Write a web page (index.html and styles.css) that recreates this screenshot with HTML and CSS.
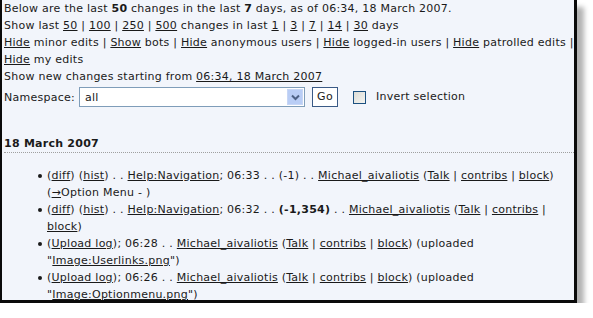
FILE: index.html
```html
<!DOCTYPE html>
<html>
<head>
<meta charset="utf-8">
<link rel="stylesheet" href="styles.css">
</head>
<body>
<div class="frame">
  <div class="content">
    <p class="line">Below are the last <b>50</b> changes in the last <b>7</b> days, as of 06:34, 18 March 2007.</p>
    <p class="line">Show last <a href="#">50</a> | <a href="#">100</a> | <a href="#">250</a> | <a href="#">500</a> changes in last <a href="#">1</a> | <a href="#">3</a> | <a href="#">7</a> | <a href="#">14</a> | <a href="#">30</a> days<br><a href="#">Hide</a> minor edits | <a href="#">Show</a> bots | <a href="#">Hide</a> anonymous users | <a href="#">Hide</a> logged-in users | <a href="#">Hide</a> patrolled <span class="nowrap">edits |</span> <a href="#">Hide</a> my edits</p>
    <p class="line">Show new changes starting from <a href="#">06:34, 18 March 2007</a></p>
    <div class="ns-form">
      <span class="ns-label">Namespace:</span>
      <span class="select"><span class="select-value">all</span><span class="select-btn"><svg width="9" height="7" viewBox="0 0 9 7"><path d="M1 1.5 L4.5 5 L8 1.5" fill="none" stroke="#4d6185" stroke-width="2"/></svg></span></span>
      <span class="go">Go</span>
      <span class="checkbox"></span>
      <span class="invert">Invert selection</span>
    </div>
    <h4 class="day">18 March 2007</h4>
    <ul class="changes">
      <li>(<a href="#">diff</a>) (<a href="#">hist</a>) . . <a href="#">Help:Navigation</a>; 06:33 . . (-1) . . <a href="#">Michael_aivaliotis</a> (<a href="#">Talk</a> | <a href="#">contribs</a> | <a href="#">block</a>) (<a href="#">→</a>Option Menu - )</li>
      <li>(<a href="#">diff</a>) (<a href="#">hist</a>) . . <a href="#">Help:Navigation</a>; 06:32 . . <b>(-1,354)</b> . . <a href="#">Michael_aivaliotis</a> (<a href="#">Talk</a> | <a href="#">contribs</a> | <a href="#">block</a>)</li>
      <li>(<a href="#">Upload log</a>); 06:28 . . <a href="#">Michael_aivaliotis</a> (<a href="#">Talk</a> | <a href="#">contribs</a> | <a href="#">block</a>) (uploaded "<a href="#">Image:Userlinks.png</a>")</li>
      <li>(<a href="#">Upload log</a>); 06:26 . . <a href="#">Michael_aivaliotis</a> (<a href="#">Talk</a> | <a href="#">contribs</a> | <a href="#">block</a>) (uploaded "<a href="#">Image:Optionmenu.png</a>")</li>
    </ul>
  </div>
</div>
</body>
</html>
```

FILE: styles.css
```css
html, body {
  margin: 0;
  padding: 0;
  background: #ffffff;
}
body {
  font-family: "DejaVu Sans", Verdana, sans-serif;
  font-size: 11px;
  line-height: 17px;
  letter-spacing: 0.25px;
  color: #1a1a1a;
}
.frame {
  width: 572px;
  height: 300px;
  border-left: 2px solid #0a0a0a;
  border-right: 3px solid #0a0a0a;
  border-bottom: 3px solid #0a0a0a;
  background: #f2f5fb;
  box-shadow: 7px 7px 5px rgba(0, 0, 0, 0.3);
  overflow: hidden;
}
.content {
  padding: 0 0 0 2px;
}
.line {
  margin: 0;
}
.nowrap {
  white-space: nowrap;
}
a {
  color: #1a1a1a;
  text-decoration: underline;
}
b {
  font-weight: bold;
}
.ns-form {
  display: flex;
  align-items: center;
  height: 20px;
  margin-top: 2px;
}
.ns-label {
  width: 75px;
}
.select {
  display: flex;
  align-items: center;
  justify-content: space-between;
  box-sizing: border-box;
  width: 226px;
  height: 20px;
  border: 1px solid #7f9db9;
  background: #ffffff;
  padding-left: 5px;
}
.select-btn {
  display: flex;
  align-items: center;
  justify-content: center;
  width: 16px;
  height: 16px;
  margin-right: 1px;
  background: #b9cdf5;
  border: 1px solid #c7d6f5;
  box-sizing: border-box;
}
.go {
  box-sizing: border-box;
  width: 26px;
  height: 20px;
  margin-left: 7px;
  border: 1px solid #3a5a86;
  background: #ffffff;
  text-align: center;
  line-height: 18px;
}
.checkbox {
  box-sizing: border-box;
  width: 13px;
  height: 13px;
  margin-left: 15px;
  border: 1px solid #1c5180;
  background: linear-gradient(135deg, #dcdcd6, #f4f4f0);
}
.invert {
  margin-left: 10px;
  margin-top: -2px;
}
.day {
  margin: 28px 0 0 0;
  font-size: 11px;
  font-weight: bold;
  line-height: 17px;
  padding-bottom: 0;
  border-bottom: 1px dotted #a0a0a0;
}
.changes {
  margin: 14px 0 0 0;
  padding-left: 43px;
  padding-right: 8px;
  list-style: none;
}
.changes li {
  position: relative;
  margin: 0;
}
.changes li::before {
  content: "";
  position: absolute;
  left: -9px;
  top: 7px;
  width: 4px;
  height: 4px;
  border-radius: 2px;
  background: #1a1a1a;
}
```
